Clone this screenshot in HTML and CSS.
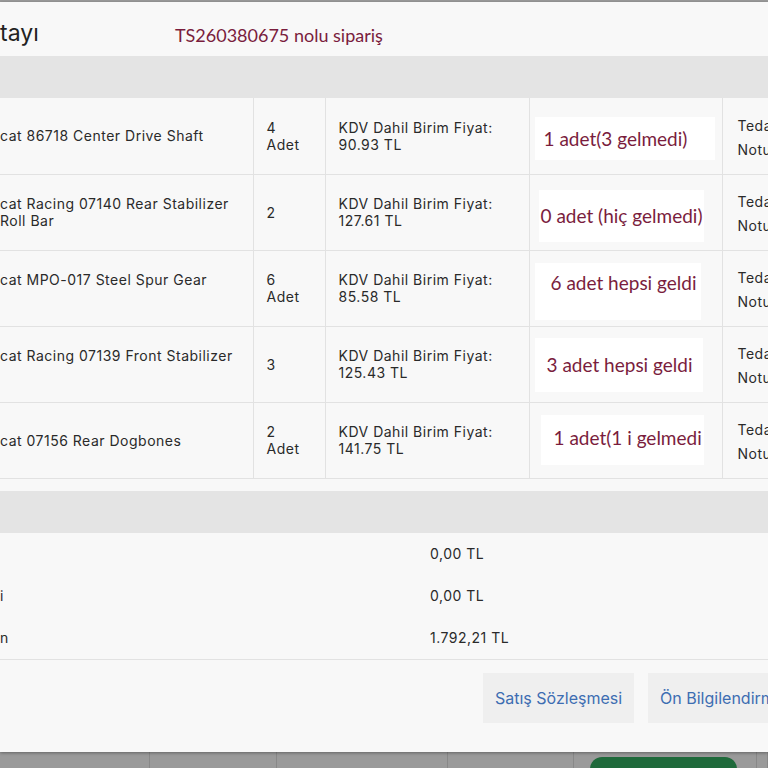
FILE: index.html
```html
<html>
  <head>
    <meta charset="utf-8">
    <link rel="stylesheet" href="styles.css">
  </head>
  <body>
    <div class="modal">
      <div class="modal-head">
        <h2 class="title">tayı</h2>
        <span class="order-no">TS260380675 nolu sipariş</span>
      </div>
      <div class="band"></div>

      <!-- order lines -->
      <table class="items">
        <colgroup>
          <col class="c-name"><col class="c-qty"><col class="c-price"><col class="c-note"><col class="c-supp">
        </colgroup>
        <tr>
          <td class="name">cat 86718 Center Drive Shaft</td>
          <td>4<br>Adet</td>
          <td>KDV Dahil Birim Fiyat:<br>90.93 TL</td>
          <td class="note-cell"><span class="note note-1">1 adet(3 gelmedi)</span></td>
          <td class="supp"><div>Tedarikçi</div><div>Notu</div></td>
        </tr>
        <tr>
          <td class="name">cat Racing 07140 Rear Stabilizer<br>Roll Bar</td>
          <td>2</td>
          <td>KDV Dahil Birim Fiyat:<br>127.61 TL</td>
          <td class="note-cell"><span class="note note-2">0 adet (hiç gelmedi)</span></td>
          <td class="supp"><div>Tedarikçi</div><div>Notu</div></td>
        </tr>
        <tr>
          <td class="name name-top">cat MPO-017 Steel Spur Gear</td>
          <td>6<br>Adet</td>
          <td>KDV Dahil Birim Fiyat:<br>85.58 TL</td>
          <td class="note-cell"><span class="note note-3">6 adet hepsi geldi</span></td>
          <td class="supp"><div>Tedarikçi</div><div>Notu</div></td>
        </tr>
        <tr>
          <td class="name name-top">cat Racing 07139 Front Stabilizer</td>
          <td>3</td>
          <td>KDV Dahil Birim Fiyat:<br>125.43 TL</td>
          <td class="note-cell"><span class="note note-4">3 adet hepsi geldi</span></td>
          <td class="supp"><div>Tedarikçi</div><div>Notu</div></td>
        </tr>
        <tr>
          <td class="name">cat 07156 Rear Dogbones</td>
          <td>2<br>Adet</td>
          <td>KDV Dahil Birim Fiyat:<br>141.75 TL</td>
          <td class="note-cell"><span class="note note-5">1 adet(1 i gelmedi</span></td>
          <td class="supp"><div>Tedarikçi</div><div>Notu</div></td>
        </tr>
      </table>

      <!-- totals -->
      <div class="band band-sum"></div>
      <div class="sum-row"><span></span><span>0,00 TL</span></div>
      <div class="sum-row"><span>i</span><span>0,00 TL</span></div>
      <div class="sum-row"><span>n</span><span>1.792,21 TL</span></div>

      <div class="modal-foot">
        <button class="btn">Satış Sözleşmesi</button>
        <button class="btn">Ön Bilgilendirme Formu</button>
      </div>
    </div>

    <!-- page behind the dialog -->
    <div class="backdrop">
      <div class="bd-col"></div>
      <div class="bd-col"></div>
      <div class="bd-col"></div>
      <div class="bd-col"></div>
      <div class="bd-col"><div class="bd-btn"></div></div>
      <div class="bd-col"></div>
    </div>
  </body>
</html>
```

FILE: styles.css
```css
* {
  box-sizing: border-box;
}

body {
  margin: 0;
  height: 768px;
  overflow: hidden;
  background: #9a9a9a;
  font-family: Inter, "Noto Sans", sans-serif;
  color: #2a2a2a;
}

.modal {
  margin-top: 2px;
  width: 768px;
  height: 750px;
  overflow: hidden;
  background: #f8f8f8;
  box-shadow: 0 1px 3px rgba(0, 0, 0, 0.35);
  position: relative;
  z-index: 1;
}

.modal-head {
  height: 54px;
  display: grid;
  grid-template-columns: 175px auto;
  align-items: center;
  padding-top: 8px;
}

.title {
  margin: 0;
  font-size: 23px;
  font-weight: 400;
  color: #222;
}

.order-no {
  margin-top: 4px;
  font-family: Lato, sans-serif;
  font-size: 18px;
  color: #7a1d3d;
}

.band {
  height: 42px;
  background: #e4e4e4;
}

/* order lines */
.items {
  width: 850px;
  table-layout: fixed;
  border-collapse: collapse;
}

.c-name { width: 253px; }
.c-qty { width: 72px; }
.c-price { width: 204px; }
.c-note { width: 193px; }
.c-supp { width: 128px; }

.items td {
  height: 76px;
  padding: 0 13px;
  border-bottom: 1px solid #e2e2e2;
  border-right: 1px solid #e2e2e2;
  font-size: 14px;
  letter-spacing: 0.5px;
  line-height: 17px;
  vertical-align: middle;
  white-space: nowrap;
  overflow: hidden;
}

.items td.name {
  padding-left: 0;
}

.items td.name-top {
  padding-bottom: 18px;
}

.items td.supp {
  padding-left: 15px;
  line-height: 24px;
  padding-top: 4px;
}

.items td.note-cell {
  padding: 0 0 0 5px;
  letter-spacing: 0;
}

/* notes pasted over the status column */
.note {
  display: inline-block;
  background: #fff;
  font-family: Lato, sans-serif;
  font-size: 19px;
  line-height: 22px;
  color: #7a1d3d;
}

.note-1 { width: 180px; padding: 11px 9px 10px; margin-top: 6px; }
.note-2 { padding: 15px 2px; margin: 8px 0 0 4px; }
.note-3 { padding: 9px 4px 26px 16px; margin-top: 6px; }
.note-4 { padding: 16px 10px 16px 12px; margin-top: 2px; }
.note-5 { padding: 12px 2px 16px 13px; margin: 0 0 0 6px; }

/* totals */
.band-sum {
  margin-top: 12px;
}

.sum-row {
  height: 42px;
  display: grid;
  grid-template-columns: 430px auto;
  align-items: center;
  font-size: 14px;
  letter-spacing: 0.5px;
}

.modal-foot {
  border-top: 1px solid #e2e2e2;
  display: flex;
  gap: 14px;
  padding: 13px 0 0 483px;
}

.btn {
  height: 50px;
  padding: 0 12px;
  border: 0;
  background: #efefef;
  color: #3d6db2;
  font-family: Inter, sans-serif;
  font-size: 16px;
  white-space: nowrap;
}

/* page behind the dialog */
.backdrop {
  height: 16px;
  display: grid;
  grid-template-columns: 150px 127px 171px 126px 183px auto;
  background: #9a9a9a;
}

.bd-col {
  border-right: 1px solid #888;
}

.bd-btn {
  margin: 5px 0 0 16px;
  width: 147px;
  height: 30px;
  background: #1f6a3b;
  border-radius: 12px;
}
```
